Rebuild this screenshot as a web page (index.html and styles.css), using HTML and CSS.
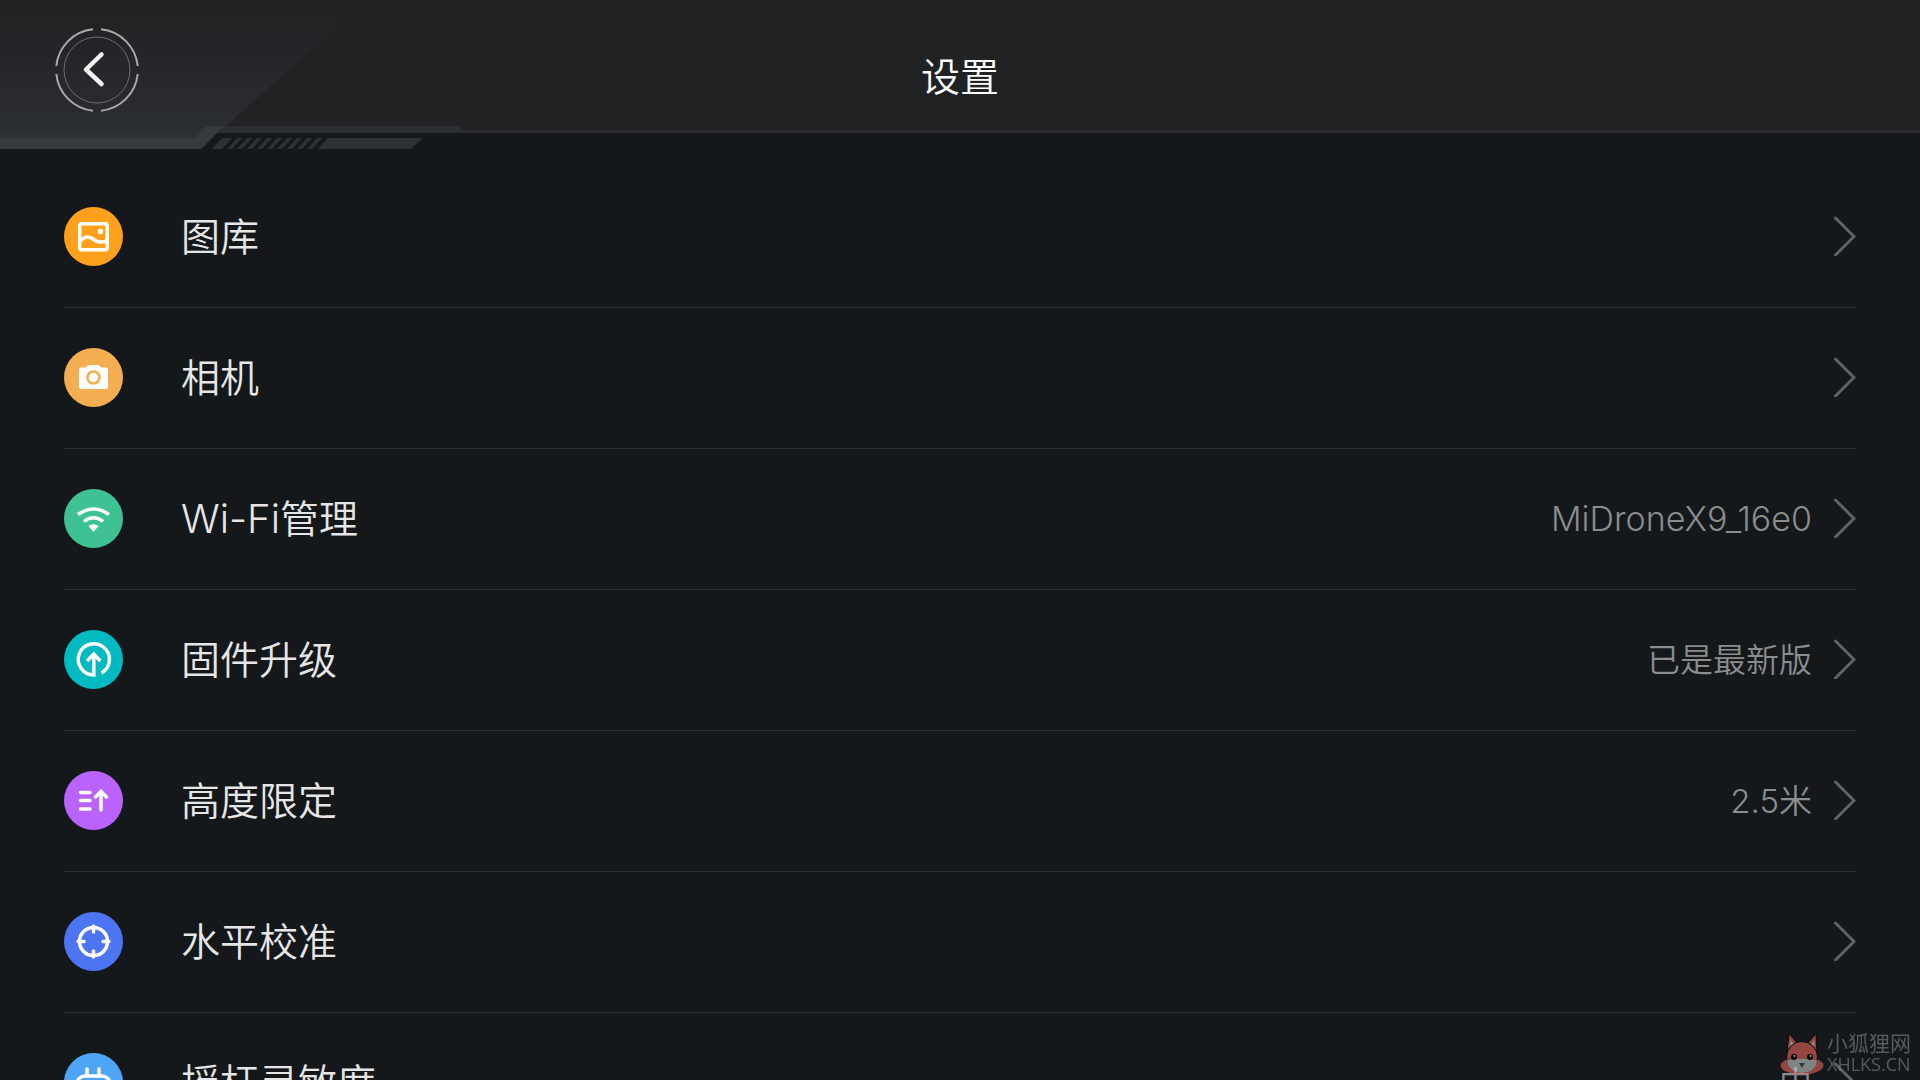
FILE: index.html
```html
<!DOCTYPE html>
<html lang="zh-CN">
<head>
    <meta charset="UTF-8">
    <meta name="viewport" content="width=device-width, initial-scale=1.0">
    <title>设置</title>
    <link rel="stylesheet" href="styles.css">
</head>

<body>
    <header class="topbar">
        <!-- 左上角装饰 -->
        <svg class="decor" viewBox="0 0 480 150" aria-hidden="true">
            <defs>
                <linearGradient id="panel" x1="0" y1="0" x2="0" y2="1">
                    <stop offset="0" stop-color="#212224"/>
                    <stop offset="0.2" stop-color="#222325"/>
                    <stop offset="0.65" stop-color="#27292c"/>
                    <stop offset="1" stop-color="#2b2f32"/>
                </linearGradient>
                <pattern id="hatch" width="10" height="11" patternUnits="userSpaceOnUse" x="227" y="138">
                    <path d="M0 11h5L15 0h-5z M-10 11h5L5 0h-5z" fill="#2d3134"/>
                </pattern>
            </defs>
            <path d="M0 0H366L217 134H0z" fill="url(#panel)"/>
            <path d="M0 133h199l-5 5H0z" fill="#2e3235"/>
            <path d="M207 126h251l8 6H217l-16 17H0v-11h194z" fill="#2b2f32"/>
            <path d="M0 138h194l13-12h17l-23 23H0z" fill="#363a3c"/>
            <path d="M222 138h10l-10 11h-10z" fill="#2d3134"/>
            <path d="M237 138h88l-10 11h-88z" fill="url(#hatch)"/>
            <path d="M328 138h95l-12 11h-93z" fill="#2d3134"/>
        </svg>
        <button class="back" type="button" aria-label="返回">
            <svg viewBox="0 0 84 84" fill="none" stroke="#a9abac">
                <path d="M46 1.300A41 41 0 0 1 82.700 38M82.700 46A41 41 0 0 1 46 82.700M38 82.700A41 41 0 0 1 1.300 46M1.300 38A41 41 0 0 1 38 1.300" stroke-width="2"/>
                <circle cx="42" cy="42" r="33" stroke="#6c6e70"/>
                <path d="M46.500 26.500L31 41.500 46.500 56" stroke="#f2f2f2" stroke-width="4.500" stroke-linecap="round" stroke-linejoin="round"/>
            </svg>
        </button>
        <h1>设置</h1>
    </header>

    <main>
        <ul class="list">
            <li><a href="#gallery">
                <svg class="icon" viewBox="0 0 59 59" fill="none" stroke="#fff" stroke-width="3.500">
                    <circle cx="29.500" cy="29.500" r="29.500" fill="#ffa01c" stroke="none"/>
                    <rect x="15.700" y="16.700" width="27.500" height="26" rx="2"/>
                    <path d="M16 34c5-5 9-5 13-2s7 4 14 2"/>
                    <circle cx="36.500" cy="24.500" r="2.700" fill="#fff" stroke="none"/>
                </svg>
                <span class="name">图库</span>
                <svg class="arrow" viewBox="0 0 22 40"><path d="M1.500 2L20 20.500 1.500 39"/></svg>
            </a></li>
            <li><a href="#camera">
                <svg class="icon" viewBox="0 0 59 59">
                    <circle cx="29.500" cy="29.500" r="29.500" fill="#f2ae50"/>
                    <path d="M17 19.500h5l2-2.500h11l2 2.500h5a2 2 0 0 1 2 2V39a2 2 0 0 1-2 2H17a2 2 0 0 1-2-2V21.500a2 2 0 0 1 2-2z" fill="#fff"/>
                    <circle cx="29.500" cy="29.500" r="6" fill="none" stroke="#f2ae50" stroke-width="2.600"/>
                </svg>
                <span class="name">相机</span>
                <svg class="arrow" viewBox="0 0 22 40"><path d="M1.500 2L20 20.500 1.500 39"/></svg>
            </a></li>
            <li><a href="#wifi">
                <svg class="icon" viewBox="0 0 59 59" fill="none" stroke="#fff" stroke-width="3.500">
                    <circle cx="29.500" cy="29.500" r="29.500" fill="#3fc293" stroke="none"/>
                    <path d="M14 25.500Q29.500 14.500 45 25.500M20 32.500Q29.500 25 39 32.500"/>
                    <path d="M24.500 37Q29.500 33.500 34.500 37L29.500 43z" fill="#fff" stroke="none"/>
                </svg>
                <span class="name"><span class="latin">Wi-Fi</span>管理</span>
                <span class="value"><span class="latin">MiDroneX9_16e0</span></span>
                <svg class="arrow" viewBox="0 0 22 40"><path d="M1.500 2L20 20.500 1.500 39"/></svg>
            </a></li>
            <li><a href="#firmware">
                <svg class="icon" viewBox="0 0 59 59" fill="none" stroke="#fff" stroke-width="3.500">
                    <circle cx="29.500" cy="29.500" r="29.500" fill="#00bac2" stroke="none"/>
                    <path d="M29.800 24V45A15.600 15.600 0 1 1 37.500 43"/>
                    <path d="M23 31l6.700-7 6.700 7"/>
                </svg>
                <span class="name">固件升级</span>
                <span class="value">已是最新版</span>
                <svg class="arrow" viewBox="0 0 22 40"><path d="M1.500 2L20 20.500 1.500 39"/></svg>
            </a></li>
            <li><a href="#height">
                <svg class="icon" viewBox="0 0 59 59" fill="none" stroke="#fff" stroke-width="3.500" stroke-linecap="round">
                    <circle cx="29.500" cy="29.500" r="29.500" fill="#ba63fc" stroke="none"/>
                    <path d="M16.500 21.500h9.500M16.500 29.500h9.500M16.500 38h9.500M37 39V20.500M31.500 26l5.500-5.500 5.500 5.500"/>
                </svg>
                <span class="name">高度限定</span>
                <span class="value">2.5米</span>
                <svg class="arrow" viewBox="0 0 22 40"><path d="M1.500 2L20 20.500 1.500 39"/></svg>
            </a></li>
            <li><a href="#level">
                <svg class="icon" viewBox="0 0 59 59" fill="none" stroke="#fff" stroke-width="3.500" stroke-linecap="round">
                    <circle cx="29.500" cy="29.500" r="29.500" fill="#4d74f2" stroke="none"/>
                    <circle cx="29.500" cy="29.500" r="14"/>
                    <path d="M29.500 14v6M29.500 39v6M14 29.500h6M39 29.500h6"/>
                </svg>
                <span class="name">水平校准</span>
                <svg class="arrow" viewBox="0 0 22 40"><path d="M1.500 2L20 20.500 1.500 39"/></svg>
            </a></li>
            <li><a href="#stick">
                <svg class="icon" viewBox="0 0 59 59" fill="none" stroke="#fff" stroke-width="3.500" stroke-linecap="round">
                    <circle cx="29.500" cy="29.500" r="29.500" fill="#4fa5f5" stroke="none"/>
                    <rect x="13" y="23" width="33" height="20" rx="8"/>
                    <path d="M23 16v7M35 16v7"/>
                </svg>
                <span class="name">摇杆灵敏度</span>
                <span class="value">中</span>
                <svg class="arrow" viewBox="0 0 22 40"><path d="M1.500 2L20 20.500 1.500 39"/></svg>
            </a></li>
        </ul>
    </main>

    <div class="watermark">
        <svg viewBox="0 0 44 42">
            <ellipse cx="22" cy="32.500" rx="21.500" ry="9" fill="#e8645a"/>
            <path d="M7 19L9 0.500 18 11zM37 19L36 0.500 27 11z" fill="#e8645a" stroke="#000"/>
            <path d="M9.500 14L11 7l4 6zM34.500 14L34 7l-4 6z" fill="#e0d8d5"/>
            <circle cx="22" cy="24" r="15.500" fill="#e8645a" stroke="#000"/>
            <path d="M7 27q5 0 9-1h12q4 1 9 1a15 13 0 0 1-30 0z" fill="#c8cbcc"/>
            <circle cx="14" cy="24" r="3" fill="#000"/>
            <circle cx="30" cy="24" r="3" fill="#000"/>
            <circle cx="14.500" cy="23" r="1" fill="#fff"/>
            <circle cx="30.500" cy="23" r="1" fill="#fff"/>
            <path d="M19 30h6l-3 5z" fill="#2f5a52"/>
        </svg>
        <p>小狐狸网<br><span>XHLKS.CN</span></p>
    </div>
</body>
</html>
```
FILE: styles.css
```css
* {
    box-sizing: border-box;
}

body {
    font-family: Inter, 'Noto Sans CJK SC', sans-serif;
    font-weight: 350;
    margin: 0;
    height: 100vh;
    overflow: hidden;
    background-color: #14181b;
    color: #e6e6e6;
}

/* 顶部标题栏 */
.topbar {
    position: relative;
    height: 133px;
    display: flex;
    align-items: center;
    justify-content: center;
    padding-top: 23px;
    background: #212224;
    border-bottom: 3px solid #2b2f32;
}

.topbar h1 {
    margin: 0;
    font-size: 39px;
    font-weight: 350;
    line-height: 56px;
    color: #fff;
}

.decor {
    position: absolute;
    top: 0;
    left: 0;
    width: 480px;
    height: 150px;
}

.back {
    position: absolute;
    top: 28px;
    left: 55px;
    width: 84px;
    height: 84px;
    padding: 0;
    border: 0;
    background: none;
    cursor: pointer;
}

.back svg {
    display: block;
}

/* 设置列表 */
.list {
    margin: 0;
    padding: 34px 63px 0;
    list-style: none;
}

.list li {
    border-bottom: 1px solid #2c3033;
}

.list a {
    display: flex;
    align-items: center;
    height: 140px;
    padding-bottom: 2px;
    color: inherit;
    text-decoration: none;
}

.icon {
    width: 59px;
    height: 59px;
    margin: 0 58px 0 1px;
}

.name,
.value {
    padding-top: 2px;
    line-height: 56px;
}

.name {
    flex: 1;
    font-size: 39px;
}

.name .latin {
    font-size: 40px;
}

.value {
    font-size: 33px;
    color: #8a8c8d;
}

.value .latin {
    font-size: 34px;
}

.arrow {
    width: 22px;
    height: 40px;
    margin: 0 1px 0 22px;
    fill: none;
    stroke: #606365;
    stroke-width: 3;
    stroke-linecap: round;
}

/* 右下角水印 */
.watermark {
    position: fixed;
    right: 9px;
    bottom: 5px;
    display: flex;
    align-items: center;
    gap: 3px;
    color: #84878a;
    opacity: 0.6;
}

.watermark svg {
    width: 44px;
    height: 42px;
}

.watermark p {
    margin: 0;
    font-size: 21px;
    font-weight: 400;
    line-height: 20px;
}

.watermark span {
    font-family: 'Open Sans', sans-serif;
    font-size: 18px;
}
```
